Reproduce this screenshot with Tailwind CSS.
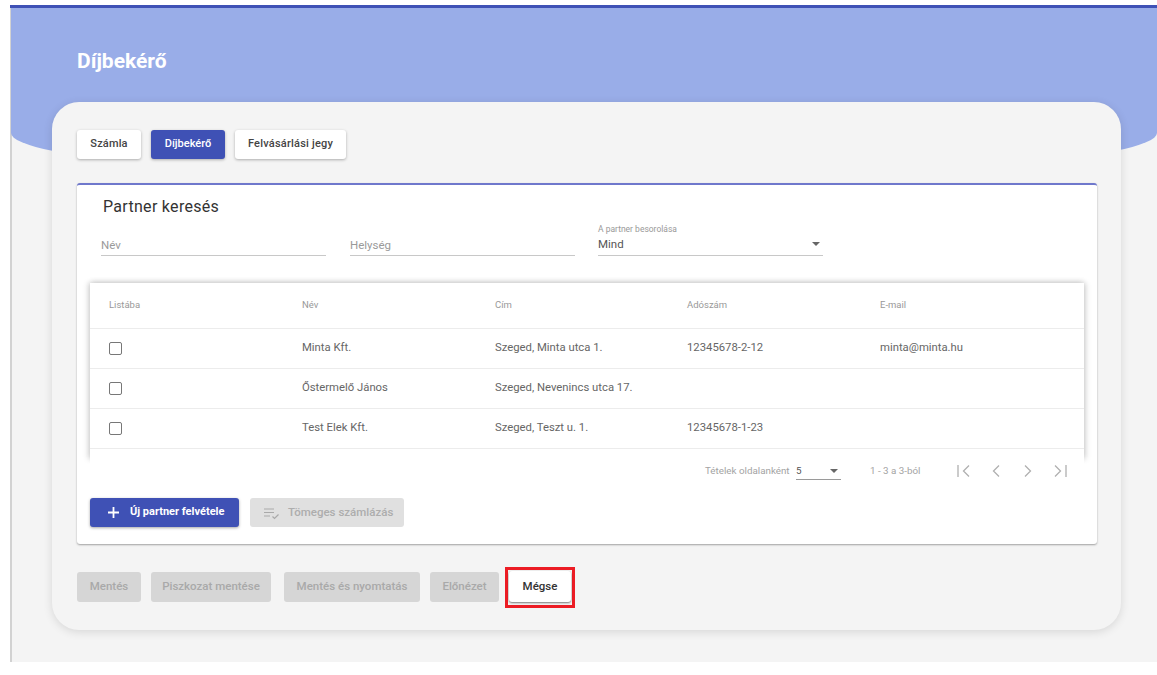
<!doctype html>
<html lang="hu">
<head>
<meta charset="utf-8">
<script src="https://cdn.jsdelivr.net/npm/@tailwindcss/browser@4"></script>
</head>
<body class="bg-white font-['Roboto',sans-serif]">
<div class="w-[1157px] h-[675px] overflow-hidden bg-white pt-[5px] pl-[10px]">
  <div class="relative h-[657px] bg-[#f4f4f4] border-l-2 border-[#d2d2d2]">
    <div class="absolute left-[-2px] right-0 top-0 h-[2.5px] bg-[#3f51b5] z-10"></div>
    <div class="-ml-[1px] h-[176px] bg-[#99ade8] rounded-b-[50%_48px] pt-[44px] pl-[66px] mb-[-79px]">
      <h1 class="text-[21px] leading-[24px] font-bold text-white">Díjbekérő</h1>
    </div>
    <div class="relative ml-[40px] w-[1069px] h-[528px] rounded-[27px] bg-[#f4f4f4] shadow-[0_2px_10px_rgba(0,0,0,0.12)] pt-[28px] px-[25px]">
      <div class="flex gap-[10px] h-[29px]">
        <button class="w-[64px] rounded-[3px] bg-white text-[#444] text-[11px] tracking-[0.15px] font-medium shadow-[0_1px_3px_rgba(0,0,0,0.3)]">Számla</button>
        <button class="w-[74px] rounded-[3px] bg-[#3f51b5] text-white text-[11px] font-medium shadow-[0_1px_3px_rgba(0,0,0,0.3)]">Díjbekérő</button>
        <button class="w-[111px] rounded-[3px] bg-white text-[#444] text-[11px] tracking-[0.2px] font-medium shadow-[0_1px_3px_rgba(0,0,0,0.3)]">Felvásárlási jegy</button>
      </div>
      <section class="mt-[24px] h-[361px] w-[1020px] rounded-[3px] bg-white border-t-2 border-[#6f78cc] shadow-[0_1px_2px_rgba(0,0,0,0.35)] pl-[13px]">
        <h2 class="pt-[12px] pl-[13px] text-[16px] leading-[19px] tracking-[0.3px] text-[#333]">Partner keresés</h2>
        <div class="flex gap-[24px] mt-[5px] ml-[11px] h-[35px]">
          <div class="w-[225px] border-b border-[#c8c8c8] text-[11.5px] text-[#9a9a9a] pt-[16px] leading-[16px]">Név</div>
          <div class="w-[225px] border-b border-[#c8c8c8] text-[11.5px] text-[#9a9a9a] pt-[16px] leading-[16px]">Helység</div>
          <div class="relative w-[225px] -ml-[1px] border-b border-[#c8c8c8] pt-[3px]">
            <div class="text-[8.5px] leading-[11px] text-[#999]">A partner besorolása</div>
            <div class="text-[11.5px] leading-[16px] mt-[1px] text-[#555]">Mind</div>
            <div class="absolute right-[3px] top-[21px] border-x-[4px] border-t-[4px] border-x-transparent border-t-[#666]"></div>
          </div>
        </div>
        <div class="mt-[27px] w-[994px] bg-white shadow-[-2px_0_6px_rgba(0,0,0,0.14),2px_0_6px_rgba(0,0,0,0.14),0_-2px_6px_rgba(0,0,0,0.05)]">
          <div class="grid grid-cols-[212px_193px_192px_193px_204px] h-[46px] pl-[19px] items-center text-[9.5px] text-[#999] border-b border-[#ececec]">
            <div>Listába</div><div class="-ml-[19px]">Név</div><div class="-ml-[19px]">Cím</div><div class="-ml-[19px]">Adószám</div><div class="-ml-[19px]">E-mail</div>
          </div>
          <div class="grid grid-cols-[212px_193px_192px_193px_204px] h-[40px] pl-[19px] items-center text-[11.3px] text-[#666] border-b border-[#ececec]">
            <div class="w-[13px] h-[13px] rounded-[2px] border-[1.5px] border-[#777]"></div><div class="-ml-[19px]">Minta Kft.</div><div class="-ml-[19px]">Szeged, Minta utca 1.</div><div class="-ml-[19px]">12345678-2-12</div><div class="-ml-[19px]">minta@minta.hu</div>
          </div>
          <div class="grid grid-cols-[212px_193px_192px_193px_204px] h-[40px] pl-[19px] items-center text-[11.3px] text-[#666] border-b border-[#ececec]">
            <div class="w-[13px] h-[13px] rounded-[2px] border-[1.5px] border-[#777]"></div><div class="-ml-[19px]">Őstermelő János</div><div class="-ml-[19px]">Szeged, Nevenincs utca 17.</div><div></div><div></div>
          </div>
          <div class="grid grid-cols-[212px_193px_192px_193px_204px] h-[40px] pl-[19px] items-center text-[11.3px] text-[#666] border-b border-[#ececec]">
            <div class="w-[13px] h-[13px] rounded-[2px] border-[1.5px] border-[#777]"></div><div class="-ml-[19px]">Test Elek Kft.</div><div class="-ml-[19px]">Szeged, Teszt u. 1.</div><div class="-ml-[19px]">12345678-1-23</div><div></div>
          </div>
          <div class="h-[10px]"></div>
        </div>
        <div class="relative -mt-[10px] bg-white w-[994px] h-[51px] flex items-center text-[9.8px] text-[#a3a3a3] pl-[615px] pb-[7px]">
          <span class="w-[91px] whitespace-nowrap">Tételek oldalanként</span>
          <div class="relative w-[45px] h-[15px] mt-[3px] border-b border-[#9a9a9a] text-[#555] leading-[12px]">5
            <div class="absolute right-[3px] top-[4px] border-x-[4px] border-t-[4px] border-x-transparent border-t-[#666]"></div>
          </div>
          <span class="ml-[29px] w-[50px] whitespace-nowrap">1 - 3 a 3-ból</span>
          <svg class="ml-[36px]" width="16" height="16" viewBox="0 0 16 16" fill="none" stroke="#b0b0b0" stroke-width="1.3"><path d="M2 2v12M13 2.500 7.500 8l5.500 5.500"/></svg>
          <svg class="ml-[16px]" width="16" height="16" viewBox="0 0 16 16" fill="none" stroke="#b0b0b0" stroke-width="1.3"><path d="M11 2.500 5.500 8l5.500 5.500"/></svg>
          <svg class="ml-[16px]" width="16" height="16" viewBox="0 0 16 16" fill="none" stroke="#b0b0b0" stroke-width="1.3"><path d="M5 2.500 10.500 8 5 13.500"/></svg>
          <svg class="ml-[16px]" width="16" height="16" viewBox="0 0 16 16" fill="none" stroke="#b0b0b0" stroke-width="1.3"><path d="M14 2v12M3 2.500 8.500 8 3 13.500"/></svg>
        </div>
        <div class="relative flex gap-[11px] mt-[-2px] h-[29px]">
          <button class="w-[149px] rounded-[3px] bg-[#3f51b5] text-white text-[11px] font-bold shadow-[0_1px_3px_rgba(0,0,0,0.35)] flex items-center pl-[16px] gap-[9px]">
            <svg width="15" height="15" viewBox="0 0 15 15" fill="none" stroke="white" stroke-width="1.8"><path d="M7.500 2v11M2 7.500h11"/></svg>
            <span>Új partner felvétele</span>
          </button>
          <button class="w-[154px] rounded-[3px] bg-[#e0e0e0] text-[#adadad] text-[11.5px] font-medium flex items-center pl-[13px] gap-[8px]">
            <svg width="17" height="14" viewBox="0 0 17 14" fill="none" stroke="#a9a9a9" stroke-width="1.200"><path d="M1 3h10M1 6.500h10M1 10h6M9.500 10.500l2 2 4-4"/></svg>
            <span>Tömeges számlázás</span>
          </button>
        </div>
      </section>
      <div class="flex items-center h-[30px] mt-[28px] text-[11.5px] font-medium text-[#a9a9a9]">
        <button class="w-[64px] h-[30px] rounded-[3px] bg-[#d6d6d6]">Mentés</button>
        <button class="w-[120px] h-[30px] ml-[10px] rounded-[3px] bg-[#d6d6d6]">Piszkozat mentése</button>
        <button class="w-[136px] h-[30px] ml-[13px] rounded-[3px] bg-[#d6d6d6]">Mentés és nyomtatás</button>
        <button class="w-[69px] h-[30px] ml-[10px] rounded-[3px] bg-[#d6d6d6]">Előnézet</button>
        <div class="ml-[6px] border-[3px] border-[#ec1c24] p-[1px] w-[70px] h-[41px] mt-[1px]">
          <button class="w-full h-[31px] rounded-[3px] bg-white text-[#333] shadow-[0_1px_2px_rgba(0,0,0,0.5)]">Mégse</button>
        </div>
      </div>
    </div>
  </div>
</div>
</body>
</html>
